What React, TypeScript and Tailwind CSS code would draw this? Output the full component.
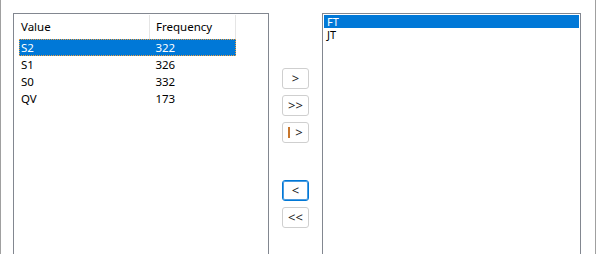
import React from "react";

const rows = [
  { v: "S2", f: "322", sel: true },
  { v: "S1", f: "326" },
  { v: "S0", f: "332" },
  { v: "QV", f: "173" },
];

function Btn({ children, focus }: { children: React.ReactNode; focus?: boolean }) {
  return (
    <div
      className={
        "w-[27px] h-[21px] rounded-[3px] bg-white flex items-center justify-center text-[13px] leading-none text-[#1a1a1a] " +
        (focus ? "border border-[#0078d7] shadow-[inset_0_0_0_1px_#4a9be0]" : "border border-[#cfcfcf]")
      }
    >
      {children}
    </div>
  );
}

export default function App() {
  return (
    <div
      className="w-[596px] h-[254px] bg-white border-x border-[#a0a0a0] flex pt-[13px] overflow-hidden text-[11.5px] text-black"
      style={{ fontFamily: '"Noto Sans", "Open Sans", sans-serif' }}
    >
      <div className="ml-[12px] w-[256px] shrink-0 border border-b-0 border-[#828790] pl-[5px] pt-px">
        <div className="flex h-[24px] w-[217px]">
          <div className="w-[131px] pl-[2px] flex items-center border-r border-[#e5e5e5]">Value</div>
          <div className="w-[86px] pl-[6px] flex items-center border-r border-[#e5e5e5]">Frequency</div>
        </div>
        {rows.map((r) => (
          <div
            key={r.v}
            className={
              "flex h-[17px] w-[217px] items-center " +
              (r.sel ? "bg-[#0078d7] text-white border border-dotted border-[#f0a040]" : "border border-transparent")
            }
          >
            <div className="w-[130px] pl-px">{r.v}</div>
            <div className="w-[86px] pl-[6px]">{r.f}</div>
          </div>
        ))}
      </div>
      <div className="w-[53px] shrink-0 flex flex-col items-center pt-[55px]">
        <div className="flex flex-col gap-[6px]">
          <Btn>&gt;</Btn>
          <Btn>&gt;&gt;</Btn>
          <Btn>
            <span className="w-[2px] h-[11px] bg-[#c8762c] mr-[5px]" />
            &gt;
          </Btn>
        </div>
        <div className="flex flex-col gap-[6px] mt-[37px]">
          <Btn focus>&lt;</Btn>
          <Btn>&lt;&lt;</Btn>
        </div>
      </div>
      <div className="w-[259px] shrink-0 border border-b-0 border-[#828790] px-px pt-px text-[11px]">
        <div className="h-[13px] bg-[#0078d7] text-white flex items-center pl-[3px] leading-[13px] overflow-hidden">FT</div>
        <div className="h-[13px] flex items-center pl-[3px] leading-[13px] overflow-hidden">JT</div>
      </div>
    </div>
  );
}
